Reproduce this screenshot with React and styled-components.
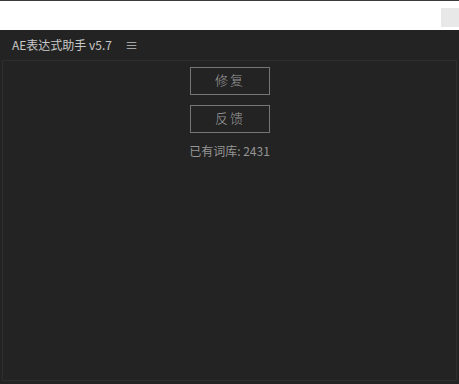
import React from "react";
import styled, { createGlobalStyle } from "styled-components";

const GlobalStyle = createGlobalStyle`
  html, body {
    margin: 0;
    padding: 0;
    background: #ffffff;
    font-family: "Noto Sans CJK SC", "Noto Sans", sans-serif;
  }
`;

const Page = styled.div`
  width: 459px;
  height: 384px;
  display: flex;
  flex-direction: column;
  overflow: hidden;
`;

const TopStrip = styled.div`
  height: 30px;
  border-top: 1px solid #3a3a3a;
  background: #ffffff;
  display: flex;
  justify-content: flex-end;
  align-items: flex-start;
  box-sizing: border-box;
`;

const ScrollNub = styled.div`
  width: 18px;
  height: 19px;
  margin-top: 7px;
  background: #e8e8e8;
`;

const Panel = styled.div`
  flex: 1;
  background: #232323;
  display: flex;
  flex-direction: column;
`;

const TabBar = styled.div`
  height: 29px;
  display: flex;
  align-items: center;
  gap: 13px;
  padding-left: 12px;
  color: #c8c8c8;
  font-size: 12px;
`;

const Menu = styled.span`
  font-size: 13px;
  color: #bdbdbd;
`;

const Body = styled.div`
  flex: 1;
  margin: 1px 2px 3px 2px;
  border: 1px solid #2e2e2e;
  display: flex;
  flex-direction: column;
  align-items: center;
  padding-top: 6px;
  gap: 10px;
`;

const Button = styled.button`
  width: 80px;
  height: 28px;
  margin-left: 1px;
  background: transparent;
  border: 1px solid #767676;
  color: #9e9e9e;
  font-family: "Noto Sans CJK SC", sans-serif;
  font-weight: 300;
  font-size: 13px;
  line-height: 24px;
  letter-spacing: 2px;
  padding: 0 0 2px 0;
`;

const Count = styled.div`
  color: #959595;
  font-size: 12px;
  margin-top: -1px;
`;

export default function App() {
  return (
    <Page>
      <GlobalStyle />
      <TopStrip>
        <ScrollNub />
      </TopStrip>
      <Panel>
        <TabBar>
          <span>AE表达式助手 v5.7</span>
          <Menu>≡</Menu>
        </TabBar>
        <Body>
          <Button>修复</Button>
          <Button>反馈</Button>
          <Count>已有词库: 2431</Count>
        </Body>
      </Panel>
    </Page>
  );
}
